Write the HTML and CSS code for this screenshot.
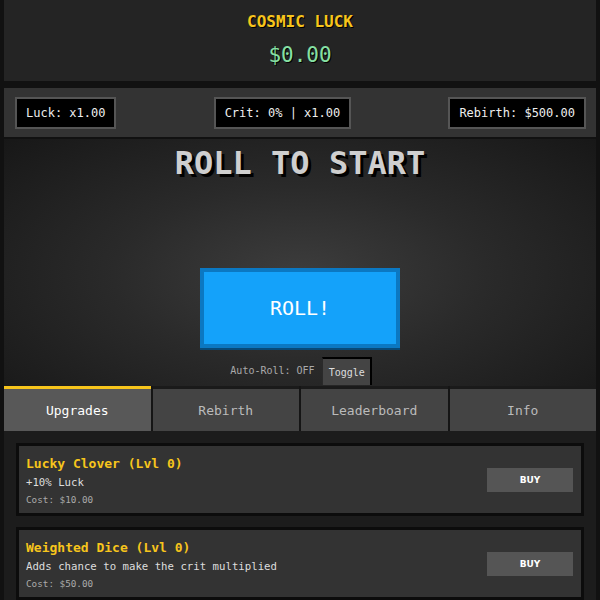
FILE: index.html
```html
<!DOCTYPE html>
<html>
<head>
<meta charset="utf-8">
<link rel="stylesheet" href="styles.css">
</head>
<body>
<div class="app">
  <header class="header">
    <h1 class="title">COSMIC LUCK</h1>
    <div class="money">$0.00</div>
  </header>
  <div class="stats">
    <div class="stat">Luck: x1.00</div>
    <div class="stat">Crit: 0% | x1.00</div>
    <div class="stat">Rebirth: $500.00</div>
  </div>
  <section class="game">
    <div class="result">ROLL TO START</div>
    <div class="spacer"></div>
    <button class="roll">ROLL!</button>
    <div class="auto">
      <span class="auto-label">Auto-Roll: OFF</span>
      <button class="toggle">Toggle</button>
    </div>
  </section>
  <nav class="tabs">
    <div class="tab active">Upgrades</div>
    <div class="tab">Rebirth</div>
    <div class="tab">Leaderboard</div>
    <div class="tab">Info</div>
  </nav>
  <section class="content">
    <div class="card">
      <div class="card-info">
        <div class="card-title">Lucky Clover (Lvl 0)</div>
        <div class="card-desc">+10% Luck</div>
        <div class="card-cost">Cost: $10.00</div>
      </div>
      <button class="buy">BUY</button>
    </div>
    <div class="card">
      <div class="card-info">
        <div class="card-title">Weighted Dice (Lvl 0)</div>
        <div class="card-desc">Adds chance to make the crit multiplied</div>
        <div class="card-cost">Cost: $50.00</div>
      </div>
      <button class="buy">BUY</button>
    </div>
  </section>
</div>
</body>
</html>
```
FILE: styles.css
```css
* { box-sizing: border-box; }
html, body { margin: 0; padding: 0; }
body {
  background: #111;
  font-family: "DejaVu Sans Mono", "Liberation Mono", monospace;
  color: #eee;
  height: 600px;
  overflow: hidden;
}
.app {
  margin: 0 4px;
  display: flex;
  flex-direction: column;
}
.header {
  background: #242424;
  height: 81px;
  text-align: center;
  padding-top: 11px;
}
.title {
  margin: 0;
  font-size: 16px;
  line-height: 22px;
  font-weight: bold;
  color: #f7c51c;
  text-shadow: 1px 1px 0 #000;
}
.money {
  margin-top: 9px;
  font-size: 21px;
  line-height: 26px;
  color: #86e0a4;
  text-shadow: 1px 1px 0 #000;
}
.stats {
  margin-top: 7px;
  background: #333;
  height: 49px;
  padding: 0 10px 0 11px;
  display: flex;
  justify-content: space-between;
  align-items: center;
}
.stat {
  background: #000;
  border: 2px solid #555;
  font-size: 12px;
  line-height: 28px;
  padding: 0 9px;
  color: #eee;
}
.game {
  margin-top: 2px;
  height: 247px;
  background: radial-gradient(ellipse 70% 80% at 50% 55%, #3d3d3d 0%, #2a2a2a 45%, #171717 100%);
  display: flex;
  flex-direction: column;
  align-items: center;
  padding-top: 5px;
}
.result {
  font-size: 32px;
  line-height: 38px;
  font-weight: bold;
  color: #cfcfcf;
  text-shadow: 3px 3px 0 #000;
}
.spacer { height: 86px; flex: none; }
.roll {
  width: 200px;
  height: 80px;
  background: #14a2fa;
  border: 4px solid #0b78c2;
  box-shadow: 0 2px 0 #084a78;
  font-family: inherit;
  font-size: 20px;
  color: #fff;
  padding: 0;
}
.auto {
  margin-top: 9px;
  display: flex;
  align-items: stretch;
  height: 28px;
  padding-left: 2px;
}
.auto-label {
  font-size: 10px;
  color: #aaa;
  line-height: 28px;
  padding-right: 7px;
}
.toggle {
  background: #444;
  border: none;
  border-top: 2px solid #000;
  border-right: 2px solid #000;
  border-left: 1px solid #2a2a2a;
  color: #ddd;
  font-family: inherit;
  font-size: 10px;
  padding: 0 6px;
  width: 50px;
}
.tabs {
  display: grid;
  grid-template-columns: repeat(4, 1fr);
  gap: 2px;
  height: 45px;
  background: #151515;
}
.tab {
  background: #444;
  border-top: 3px solid #1a1a1a;
  display: flex;
  align-items: center;
  justify-content: center;
  font-size: 13px;
  color: #bbb;
}
.tab.active {
  background: #585858;
  border-top-color: #f7c51c;
  color: #fff;
}
.content {
  background: #1c1c1c;
  padding: 12px 12px 0 12px;
  height: 170px;
}
.card {
  background: #333;
  border: 3px solid #0c0c0c;
  height: 73px;
  margin-bottom: 11px;
  display: flex;
  align-items: center;
  justify-content: space-between;
  padding: 0 8px 0 7px;
}
.card-info {
  align-self: flex-start;
  padding-top: 10px;
}
.card-title {
  color: #f7c51c;
  font-weight: bold;
  font-size: 13px;
  line-height: 16px;
}
.card-desc {
  color: #ddd;
  font-size: 10.7px;
  line-height: 16px;
  margin-top: 3px;
}
.card-cost {
  color: #aaa;
  font-size: 9.3px;
  line-height: 16px;
  margin-top: 1px;
}
.buy {
  width: 86px;
  height: 24px;
  background: #555;
  border: none;
  color: #fff;
  font-family: "DejaVu Sans", sans-serif;
  font-size: 9px;
  font-weight: bold;
  padding: 0;
}
```
